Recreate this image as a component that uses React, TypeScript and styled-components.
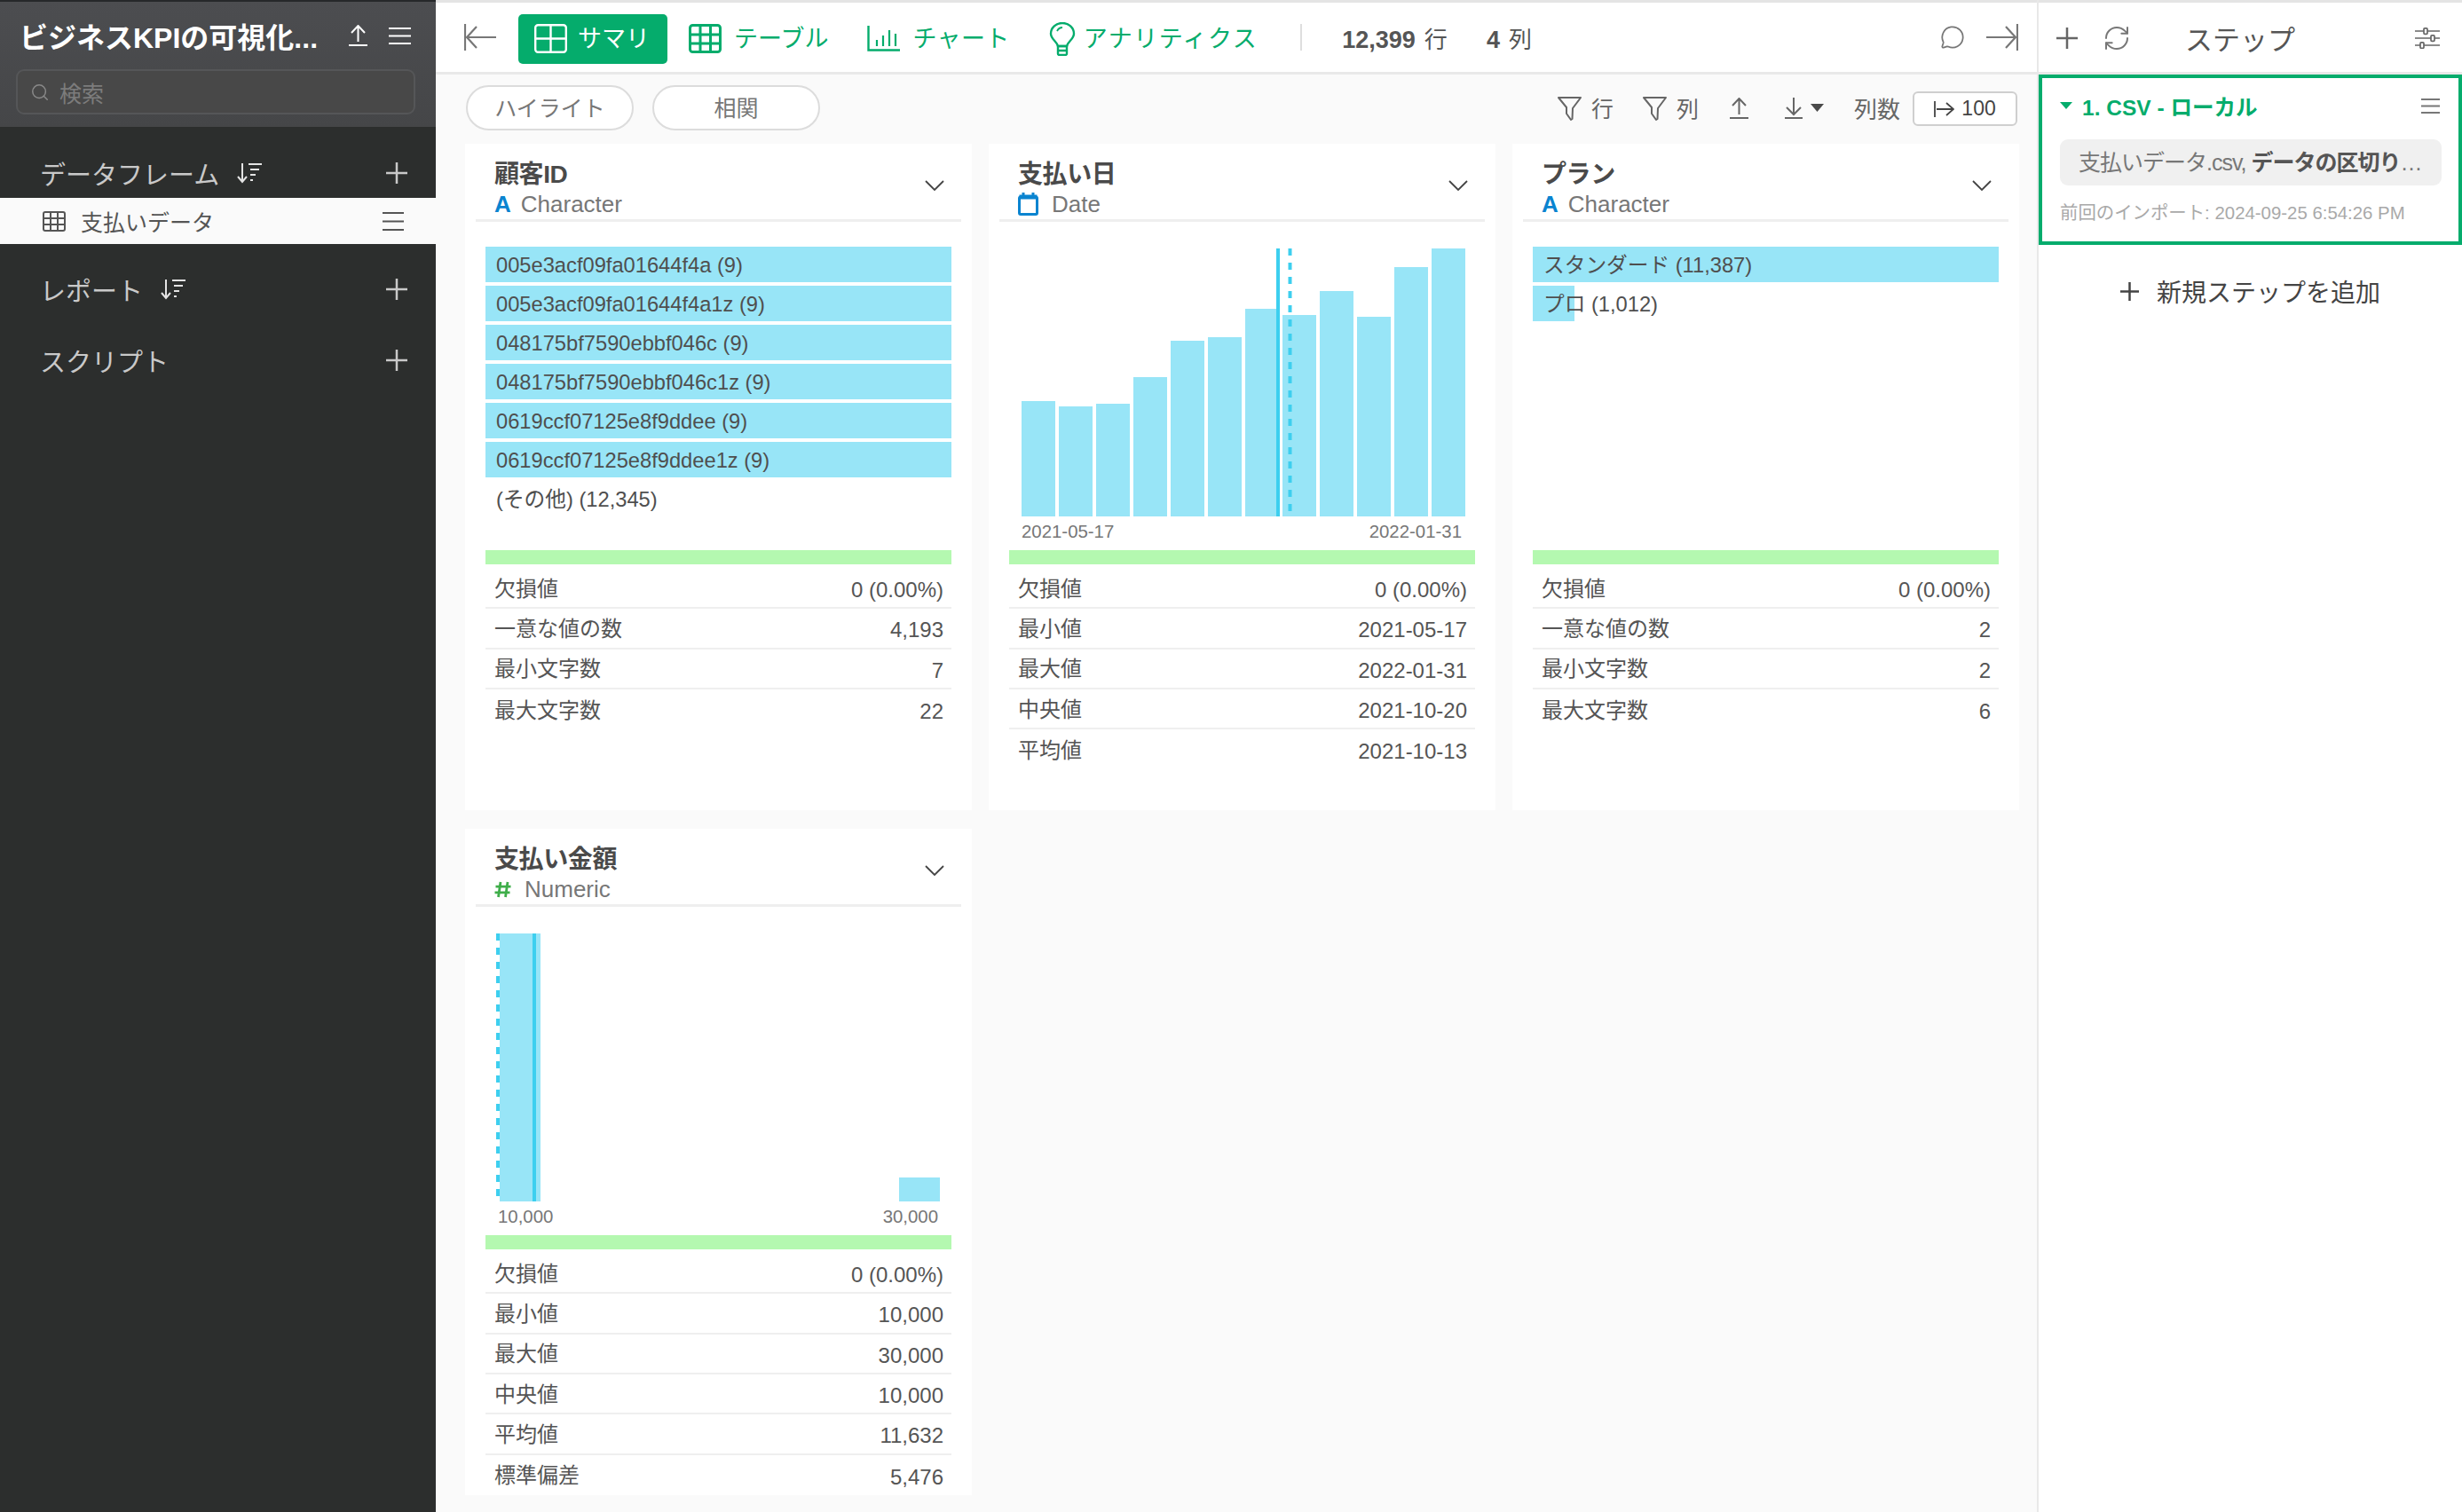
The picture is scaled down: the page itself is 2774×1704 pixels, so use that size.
import React from 'react';
import styled, { createGlobalStyle } from 'styled-components';
import { MessageCircle, RefreshCw, Search } from 'lucide-react';

const FONT = `"Liberation Sans", "Noto Sans CJK JP", sans-serif`;
const GREEN = '#05ac6c';
const BAR = '#98e5f7';
const LINE = '#3dcfef';

const GlobalStyle = createGlobalStyle`
  html, body {
    margin: 0;
    padding: 0;
    background: #fafafa;
  }
  body {
    font-family: ${FONT};
    color: #555;
  }
`;

const Page = styled.div`
  display: flex;
  width: 2774px;
  height: 1704px;
  overflow: hidden;
`;

/* sidebar */
const Sidebar = styled.aside`
  width: 491px;
  flex: none;
  background: #2c2e2d;
`;

const SideHead = styled.div`
  height: 143px;
  border-top: 2px solid #26282a;
  background: linear-gradient(#4c4d50, #454648);
  box-sizing: border-box;
  position: relative;
  padding: 0 18px;
`;

const ProjectRow = styled.div`
  display: flex;
  align-items: center;
  height: 76px;
  color: #fff;
`;

const ProjectName = styled.div`
  font-size: 32px;
  font-weight: 700;
  margin-left: 4px;
  width: 342px;
  white-space: nowrap;
`;

const ProjectIcon = styled.span<{ $left: number }>`
  display: flex;
  margin-left: ${(p) => p.$left}px;
`;

const SearchBox = styled.div`
  display: flex;
  align-items: center;
  height: 51px;
  width: 450px;
  box-sizing: border-box;
  border: 2px solid #555658;
  border-radius: 9px;
  background: #484848;
  padding-left: 14px;
  color: #8a8a8a;
  font-size: 25px;
`;

const SearchText = styled.span`
  margin-left: 11px;
  color: #7c7c7c;
`;

const SideSection = styled.div<{ $top: number }>`
  display: flex;
  align-items: center;
  height: 48px;
  margin-top: ${(p) => p.$top}px;
  padding: 0 32px 0 45px;
  color: #c9c9c9;
`;

const SideTitle = styled.span`
  font-size: 29px;
`;

const SortWrap = styled.span`
  display: flex;
  margin-left: 20px;
  color: #e4e4e4;
`;

const PlusWrap = styled.span`
  display: flex;
  margin-left: auto;
`;

const SideItem = styled.div`
  display: flex;
  align-items: center;
  height: 52px;
  background: #fafafa;
  padding: 0 36px 0 48px;
  color: #555;
  font-size: 25px;
  margin-top: 4px;
`;

const SideItemText = styled.span`
  margin-left: 17px;
`;

const SideItemMenu = styled.span`
  display: flex;
  margin-left: auto;
`;

/* center */
const Main = styled.main`
  width: 1804px;
  flex: none;
  background: #fafafa;
`;

const TopBar = styled.div`
  display: flex;
  align-items: center;
  height: 84px;
  box-sizing: border-box;
  background: #fff;
  border-top: 3px solid #e4e4e4;
  border-bottom: 3px solid #e9e9e9;
  padding: 0 21px 0 32px;
`;

const IconButton = styled.span<{ $left?: number; $auto?: boolean }>`
  display: flex;
  color: #777;
  margin-left: ${(p) => (p.$auto ? 'auto' : `${p.$left ?? 0}px`)};
`;

const Tab = styled.div<{ $active?: boolean; $first?: boolean; $gap: number; $spacing?: number }>`
  display: flex;
  align-items: center;
  gap: ${(p) => p.$gap}px;
  height: 56px;
  padding: 0 20px 0 18px;
  margin-top: 3px;
  margin-left: ${(p) => (p.$first ? 25 : 6)}px;
  border-radius: 5px;
  font-size: 27px;
  letter-spacing: ${(p) => p.$spacing ?? 0}px;
  white-space: nowrap;
  background: ${(p) => (p.$active ? GREEN : 'transparent')};
  color: ${(p) => (p.$active ? '#fff' : GREEN)};
`;

const TabText = styled.span`
  margin-top: -4px;
`;

const TopDivider = styled.span`
  width: 2px;
  height: 30px;
  background: #dedede;
  margin-left: 28px;
`;

const Count = styled.span<{ $left: number }>`
  font-size: 26px;
  margin-left: ${(p) => p.$left}px;
  white-space: nowrap;
  color: #555;

  b {
    font-size: 27px;
    margin-right: 10px;
  }
`;

const SubBar = styled.div`
  display: flex;
  align-items: center;
  height: 75px;
  padding: 0 21px 0 34px;
  margin-bottom: 3px;
`;

const Pill = styled.button`
  width: 189px;
  height: 51px;
  margin-right: 21px;
  border: 2px solid #dcdcdc;
  border-radius: 26px;
  background: #fff;
  color: #777;
  font: 25px ${FONT};
  padding: 0 0 3px;
`;

const Tool = styled.span<{ $left: number }>`
  display: flex;
  align-items: center;
  margin-left: ${(p) => p.$left}px;
  color: #666;
  font-size: 26px;
  white-space: nowrap;
`;

const ToolLabel = styled.span<{ $left: number }>`
  margin-left: ${(p) => p.$left}px;
  margin-top: -2px;
  font-size: 25px;
`;

const LimitButton = styled.span`
  display: flex;
  align-items: center;
  justify-content: center;
  gap: 8px;
  width: 118px;
  height: 39px;
  box-sizing: border-box;
  margin: 2px 0 0 14px;
  border: 2px solid #cfcfcf;
  border-radius: 6px;
  background: #fff;
  color: #444;
  font-size: 23px;
`;

const Cards = styled.div`
  display: grid;
  grid-template-columns: repeat(3, 571px);
  grid-auto-rows: 751px;
  column-gap: 19px;
  row-gap: 21px;
  margin-left: 33px;
`;

const Card = styled.section`
  background: #fff;
`;

const CardHead = styled.header`
  position: relative;
  height: 88px;
  box-sizing: border-box;
  margin: 0 12px;
  padding: 17px 0 0 21px;
  border-bottom: 3px solid #efefef;
`;

const CardTitle = styled.div`
  font-size: 28px;
  font-weight: 700;
  line-height: 36px;
  color: #4a4a4a;
  letter-spacing: -0.4px;
`;

const TypeRow = styled.div<{ $gap: number }>`
  display: flex;
  align-items: center;
  gap: ${(p) => p.$gap}px;
  height: 30px;
  font-size: 26px;
  color: #777;
`;

const TypeMark = styled.span<{ $color: string }>`
  font-weight: 700;
  font-size: 26px;
  color: ${(p) => p.$color};
`;

const Chevron = styled.span`
  position: absolute;
  right: 19px;
  top: 41px;
  display: flex;
  color: #444;
`;

const ChartArea = styled.div`
  position: relative;
  height: 370px;
  margin: 0 23px;
  padding-top: 28px;
  box-sizing: border-box;
`;

const ChartSvg = styled.svg`
  position: absolute;
  left: 0;
  top: 0;
`;

const Axis = styled.div`
  position: absolute;
  left: 14px;
  right: 15px;
  top: 337px;
  display: flex;
  justify-content: space-between;
  font-size: 20.4px;
  line-height: 24px;
  color: #777;
`;

const CategoryRow = styled.div<{ $empty?: boolean }>`
  position: relative;
  height: 40px;
  margin-bottom: 4px;
  background: ${(p) => (p.$empty ? 'transparent' : BAR)};
  font-size: 23.7px;
  line-height: 42px;
  padding-left: 12px;
  color: #4f4f4f;
  white-space: nowrap;
`;

const PartialRow = styled(CategoryRow)`
  background: transparent;
`;

const PartialFill = styled.span<{ $width: number }>`
  position: absolute;
  left: 0;
  top: 0;
  bottom: 0;
  width: ${(p) => p.$width}px;
  background: ${BAR};
`;

const PartialText = styled.span`
  position: relative;
`;

const ValidBar = styled.div`
  height: 16px;
  margin: 0 23px 5px;
  background: #b4f8b0;
`;

const StatRow = styled.div`
  display: flex;
  justify-content: space-between;
  align-items: center;
  height: 45.33px;
  box-sizing: border-box;
  margin: 0 23px;
  padding: 0 9px 0 10px;
  border-bottom: 2px solid #efefef;
  font-size: 24px;
  color: #555;

  &:last-child {
    border-bottom: none;
  }
`;

const StatLabel = styled.span`
  margin-top: -3px;
`;

const StatValue = styled.span`
  margin-top: 5px;
`;

/* right panel */
const Panel = styled.aside`
  width: 479px;
  flex: none;
  background: #fff;
  border-left: 2px solid #e8e8e8;
  box-sizing: border-box;
`;

const PanelHead = styled.div`
  display: flex;
  align-items: center;
  height: 84px;
  box-sizing: border-box;
  border-top: 3px solid #e4e4e4;
  border-bottom: 3px solid #e9e9e9;
  padding: 2px 25px 0 20px;
  color: #666;
`;

const PanelTitle = styled.span`
  margin: -2px 0 0 61px;
  font-size: 31px;
  color: #555;
`;

const SliderWrap = styled.span`
  display: flex;
  margin-left: auto;
`;

const StepBox = styled.div`
  height: 192px;
  box-sizing: border-box;
  border: 4px solid ${GREEN};
  padding: 0 19px 0 20px;
`;

const StepTitle = styled.div`
  display: flex;
  align-items: center;
  height: 62px;
  margin-bottom: 7px;
  font-size: 24.5px;
  font-weight: 700;
  color: ${GREEN};
`;

const StepCaret = styled.span`
  display: flex;
  margin-right: 11px;
`;

const StepMenu = styled.span`
  display: flex;
  margin-left: auto;
  margin-right: 2px;
  color: #777;
`;

const StepDetail = styled.div`
  height: 52px;
  line-height: 52px;
  box-sizing: border-box;
  padding: 0 21px;
  border-radius: 9px;
  background: #f0f0f0;
  font-size: 25px;
  letter-spacing: -1px;
  color: #777;
  white-space: nowrap;
  overflow: hidden;

  b {
    color: #555;
    letter-spacing: -1px;
  }
`;

const StepMeta = styled.div`
  margin-top: 14px;
  font-size: 20.4px;
  color: #a9a9a9;
  white-space: nowrap;
`;

const AddStep = styled.div`
  display: flex;
  align-items: center;
  justify-content: center;
  gap: 20px;
  height: 104px;
  font-size: 28px;
  color: #444;
  padding-left: 20px;
  padding-right: 20px;
`;

/* icons */
const Menu = ({ w, h, color = 'currentColor' }: { w: number; h: number; color?: string }) => (
  <svg width={w} height={h} viewBox={`0 0 ${w} ${h}`} stroke={color} strokeWidth="2" fill="none">
    <path d={`M0 1H${w}M0 ${h / 2}H${w}M0 ${h - 1}H${w}`} />
  </svg>
);

const Plus = ({ size, color = 'currentColor', width = 2.5 }: { size: number; color?: string; width?: number }) => (
  <svg width={size} height={size} viewBox={`0 0 ${size} ${size}`} stroke={color} strokeWidth={width} fill="none">
    <path d={`M0 ${size / 2}H${size}M${size / 2} 0V${size}`} />
  </svg>
);

const SortIcon = () => (
  <svg width="28" height="24" viewBox="0 0 28 24" stroke="currentColor" strokeWidth="2" fill="none">
    <path d="M6 1V22M1 16l5 6 5-6" />
    <path d="M13 2H28M15 8H25M15 14H21M15 20H18" />
  </svg>
);

const Upload = ({ color = 'currentColor' }: { color?: string }) => (
  <svg width="21" height="24" viewBox="0 0 21 24" stroke={color} strokeWidth="2" fill="none">
    <path d="M10.5 1V19M3 9l7.5-8L18 9M0 23H21" />
  </svg>
);

const Download = () => (
  <svg width="20" height="24" viewBox="0 0 20 24" stroke="currentColor" strokeWidth="2" fill="none">
    <path d="M10 0V19M2 11l8 8 8-8M0 23H20" />
  </svg>
);

const Caret = ({ w, h, color = 'currentColor' }: { w: number; h: number; color?: string }) => (
  <svg width={w} height={h} viewBox={`0 0 ${w} ${h}`} fill={color}>
    <path d={`M0 0H${w}L${w / 2} ${h}Z`} />
  </svg>
);

const Filter = () => (
  <svg width="27" height="28" viewBox="0 0 27 28" stroke="currentColor" strokeWidth="2" fill="none" strokeLinejoin="round">
    <path d="M1 2H26L17 14 16.5 26 15 27 10 20V13Z" />
  </svg>
);

const GridTwo = () => (
  <svg width="37" height="33" viewBox="0 0 37 33" stroke="currentColor" strokeWidth="2.4" fill="none">
    <rect x="1.2" y="1.2" width="34.6" height="30.6" rx="3" />
    <path d="M18.5 1V32M1 16.5H36" />
  </svg>
);

const GridNine = () => (
  <svg width="37" height="33" viewBox="0 0 37 33" stroke="currentColor" strokeWidth="3" fill="none">
    <rect x="1.5" y="1.5" width="34" height="30" rx="3" />
    <path d="M13 1V32M24.5 1V32M1 12H36M1 22H36" />
  </svg>
);

const ChartIcon = () => (
  <svg width="37" height="29" viewBox="0 0 37 29" stroke="currentColor" fill="none">
    <path d="M1.5 0V27.5H37" strokeWidth="2.4" />
    <path d="M11 16V23M18 11V23M25 5V23M32 9V23" strokeWidth="2.2" />
  </svg>
);

const Bulb = () => (
  <svg width="30" height="38" viewBox="0 0 30 38" stroke="currentColor" strokeWidth="2.4" fill="none">
    <path d="M10 27C9 22 2 19 2 13 2 6 8 1 15 1s13 5 13 12c0 6-7 9-8 14Z" />
    <path d="M10 27H20V35.5Q20 37 18 37H12Q10 37 10 35.5ZM10 32H20" />
    <path d="M9 10Q11 6 15 6" strokeWidth="1.8" />
  </svg>
);

const ArrowIn = ({ flip }: { flip?: boolean }) => (
  <svg
    width="36"
    height="30"
    viewBox="0 0 36 30"
    stroke="currentColor"
    strokeWidth="2.2"
    fill="none"
    transform={flip ? 'scale(-1 1)' : undefined}
  >
    <path d="M1 0V30" />
    <path d="M36 15H3M14 3L3 15 14 27" />
  </svg>
);

const TableIcon = () => (
  <svg width="26" height="23" viewBox="0 0 26 23" stroke="#555" strokeWidth="2" fill="none">
    <rect x="1" y="1" width="24" height="21" rx="2" />
    <path d="M9 1V22M17 1V22M1 8H25M1 15H25" />
  </svg>
);

const Sliders = () => (
  <svg width="28" height="24" viewBox="0 0 28 24" stroke="#666" strokeWidth="1.7" fill="#fff">
    <path d="M0 4H28M0 12H28M0 20H28" />
    <rect x="10" y="0.9" width="4" height="6.4" rx="1" />
    <rect x="18" y="8.9" width="4" height="6.4" rx="1" />
    <rect x="6" y="16.9" width="4" height="6.4" rx="1" />
  </svg>
);

const CalendarIcon = () => (
  <svg width="23" height="26" viewBox="0 0 23 26" stroke="#0a84d0" fill="none">
    <rect x="1.5" y="5" width="20" height="19.5" rx="1.5" strokeWidth="3" />
    <path d="M1.5 5H21.5" strokeWidth="5" />
    <path d="M6 0V5M17 0V5" strokeWidth="3" />
  </svg>
);

const HashIcon = () => (
  <svg width="19" height="19" viewBox="0 0 19 19" stroke="#3fae4a" strokeWidth="2.8" fill="none">
    <path d="M7 1L4.5 18M15 1L12.5 18M1.5 6.2H18.5M0.5 12.8H17.5" />
  </svg>
);

const ChevronDown = () => (
  <svg width="22" height="12" viewBox="0 0 22 12" stroke="currentColor" strokeWidth="1.8" fill="none">
    <path d="M1 1L11 11 21 1" />
  </svg>
);

const RangeArrow = () => (
  <svg width="23" height="20" viewBox="0 0 23 20" stroke="#444" strokeWidth="1.8" fill="none">
    <path d="M1 1V19M3 10H22M14 3l8 7-8 7" />
  </svg>
);

/* data */
type Stat = [string, string];

const CUSTOMER_STATS: Stat[] = [
  ['欠損値', '0 (0.00%)'],
  ['一意な値の数', '4,193'],
  ['最小文字数', '7'],
  ['最大文字数', '22'],
];

const DATE_STATS: Stat[] = [
  ['欠損値', '0 (0.00%)'],
  ['最小値', '2021-05-17'],
  ['最大値', '2022-01-31'],
  ['中央値', '2021-10-20'],
  ['平均値', '2021-10-13'],
];

const PLAN_STATS: Stat[] = [
  ['欠損値', '0 (0.00%)'],
  ['一意な値の数', '2'],
  ['最小文字数', '2'],
  ['最大文字数', '6'],
];

const AMOUNT_STATS: Stat[] = [
  ['欠損値', '0 (0.00%)'],
  ['最小値', '10,000'],
  ['最大値', '30,000'],
  ['中央値', '10,000'],
  ['平均値', '11,632'],
  ['標準偏差', '5,476'],
];

const CUSTOMER_IDS = [
  '005e3acf09fa01644f4a (9)',
  '005e3acf09fa01644f4a1z (9)',
  '048175bf7590ebbf046c (9)',
  '048175bf7590ebbf046c1z (9)',
  '0619ccf07125e8f9ddee (9)',
  '0619ccf07125e8f9ddee1z (9)',
];

const DATE_HEIGHTS = [130, 124, 127, 157, 198, 202, 234, 227, 254, 225, 281, 302];

const Stats = ({ rows }: { rows: Stat[] }) => (
  <div>
    {rows.map(([label, value]) => (
      <StatRow key={label}>
        <StatLabel>{label}</StatLabel>
        <StatValue>{value}</StatValue>
      </StatRow>
    ))}
  </div>
);

const ColumnHead = ({ title, type, gap, mark }: { title: string; type: string; gap: number; mark: React.ReactNode }) => (
  <CardHead>
    <CardTitle>{title}</CardTitle>
    <TypeRow $gap={gap}>
      {mark}
      {type}
    </TypeRow>
    <Chevron>
      <ChevronDown />
    </Chevron>
  </CardHead>
);

const DateChart = () => (
  <ChartArea>
    <ChartSvg width="526" height="334" fill="none">
      {DATE_HEIGHTS.map((h, i) => (
        <rect key={i} x={14 + 42 * i} y={332 - h} width="38" height={h} fill={BAR} />
      ))}
      <rect x="301" y="30" width="4" height="302" fill={LINE} />
      <path d="M316.5 30V326" stroke={LINE} strokeWidth="4" strokeDasharray="8 8" />
    </ChartSvg>
    <Axis>
      <span>2021-05-17</span>
      <span>2022-01-31</span>
    </Axis>
  </ChartArea>
);

const AmountChart = () => (
  <ChartArea>
    <ChartSvg width="526" height="334" fill="none">
      <rect x="16" y="30" width="46" height="302" fill={BAR} />
      <rect x="466" y="305" width="46" height="27" fill={BAR} />
      <rect x="53" y="30" width="4" height="302" fill={LINE} />
      <path d="M14 30V326" stroke={LINE} strokeWidth="4" strokeDasharray="8 8" />
    </ChartSvg>
    <Axis>
      <span>10,000</span>
      <span>30,000</span>
    </Axis>
  </ChartArea>
);

const AMark = <TypeMark $color="#0a84d0">A</TypeMark>;

const App = () => (
  <Page>
    <GlobalStyle />
    <Sidebar>
      <SideHead>
        <ProjectRow>
          <ProjectName>ビジネスKPIの可視化...</ProjectName>
          <ProjectIcon $left={29}>
            <Upload />
          </ProjectIcon>
          <ProjectIcon $left={24}>
            <Menu w={25} h={19} />
          </ProjectIcon>
        </ProjectRow>
        <SearchBox>
          <Search size={22} strokeWidth={1.6} />
          <SearchText>検索</SearchText>
        </SearchBox>
      </SideHead>
      <SideSection $top={28}>
        <SideTitle>データフレーム</SideTitle>
        <SortWrap>
          <SortIcon />
        </SortWrap>
        <PlusWrap>
          <Plus size={24} />
        </PlusWrap>
      </SideSection>
      <SideItem>
        <TableIcon />
        <SideItemText>支払いデータ</SideItemText>
        <SideItemMenu>
          <Menu w={24} h={21} color="#555" />
        </SideItemMenu>
      </SideItem>
      <SideSection $top={27}>
        <SideTitle>レポート</SideTitle>
        <SortWrap>
          <SortIcon />
        </SortWrap>
        <PlusWrap>
          <Plus size={24} />
        </PlusWrap>
      </SideSection>
      <SideSection $top={32}>
        <SideTitle>スクリプト</SideTitle>
        <PlusWrap>
          <Plus size={24} />
        </PlusWrap>
      </SideSection>
    </Sidebar>

    <Main>
      <TopBar>
        <IconButton>
          <ArrowIn />
        </IconButton>
        <Tab $active $first $gap={12}>
          <GridTwo />
          <TabText>サマリ</TabText>
        </Tab>
        <Tab $gap={14}>
          <GridNine />
          <TabText>テーブル</TabText>
        </Tab>
        <Tab $gap={14} $spacing={0.4}>
          <ChartIcon />
          <TabText>チャート</TabText>
        </Tab>
        <Tab $gap={9} $spacing={1.5}>
          <Bulb />
          <TabText>アナリティクス</TabText>
        </Tab>
        <TopDivider />
        <Count $left={45}>
          <b>12,399</b>行
        </Count>
        <Count $left={44}>
          <b>4</b>列
        </Count>
        <IconButton $auto>
          <MessageCircle size={28} strokeWidth={1.5} />
        </IconButton>
        <IconButton $left={24}>
          <ArrowIn flip />
        </IconButton>
      </TopBar>

      <SubBar>
        <Pill>ハイライト</Pill>
        <Pill>相関</Pill>
        <Tool $left={810}>
          <Filter />
          <ToolLabel $left={11}>行</ToolLabel>
        </Tool>
        <Tool $left={33}>
          <Filter />
          <ToolLabel $left={11}>列</ToolLabel>
        </Tool>
        <Tool $left={35}>
          <Upload />
        </Tool>
        <Tool $left={41}>
          <Download />
        </Tool>
        <Tool $left={9}>
          <Caret w={15} h={9} color="#4a4a4a" />
        </Tool>
        <Tool $left={34}>
          列数
          <LimitButton>
            <RangeArrow />
            100
          </LimitButton>
        </Tool>
      </SubBar>

      <Cards>
        <Card>
          <ColumnHead title="顧客ID" type="Character" gap={11} mark={AMark} />
          <ChartArea>
            {CUSTOMER_IDS.map((id) => (
              <CategoryRow key={id}>{id}</CategoryRow>
            ))}
            <CategoryRow $empty>(その他) (12,345)</CategoryRow>
          </ChartArea>
          <ValidBar />
          <Stats rows={CUSTOMER_STATS} />
        </Card>

        <Card>
          <ColumnHead title="支払い日" type="Date" gap={15} mark={<CalendarIcon />} />
          <DateChart />
          <ValidBar />
          <Stats rows={DATE_STATS} />
        </Card>

        <Card>
          <ColumnHead title="プラン" type="Character" gap={11} mark={AMark} />
          <ChartArea>
            <CategoryRow>スタンダード (11,387)</CategoryRow>
            <PartialRow>
              <PartialFill $width={47} />
              <PartialText>プロ (1,012)</PartialText>
            </PartialRow>
          </ChartArea>
          <ValidBar />
          <Stats rows={PLAN_STATS} />
        </Card>

        <Card>
          <ColumnHead title="支払い金額" type="Numeric" gap={15} mark={<HashIcon />} />
          <AmountChart />
          <ValidBar />
          <Stats rows={AMOUNT_STATS} />
        </Card>
      </Cards>
    </Main>

    <Panel>
      <PanelHead>
        <Plus size={24} />
        <IconButton $left={28}>
          <RefreshCw size={32} strokeWidth={1.5} />
        </IconButton>
        <PanelTitle>ステップ</PanelTitle>
        <SliderWrap>
          <Sliders />
        </SliderWrap>
      </PanelHead>
      <StepBox>
        <StepTitle>
          <StepCaret>
            <Caret w={14} h={8} color={GREEN} />
          </StepCaret>
          1. CSV - ローカル
          <StepMenu>
            <Menu w={21} h={17} />
          </StepMenu>
        </StepTitle>
        <StepDetail>
          支払いデータ.csv, <b>データの区切り</b>…
        </StepDetail>
        <StepMeta>前回のインポート: 2024-09-25 6:54:26 PM</StepMeta>
      </StepBox>
      <AddStep>
        <Plus size={21} color="#444" />
        新規ステップを追加
      </AddStep>
    </Panel>
  </Page>
);

export default App;
